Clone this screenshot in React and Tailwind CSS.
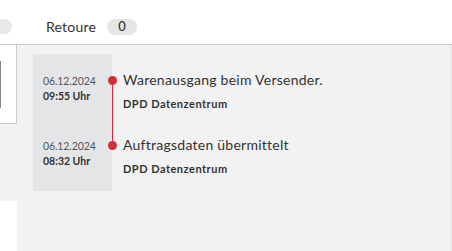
const events = [
  {
    date: "06.12.2024",
    time: "09:55 Uhr",
    title: "Warenausgang beim Versender.",
    place: "DPD Datenzentrum",
  },
  {
    date: "06.12.2024",
    time: "08:32 Uhr",
    title: "Auftragsdaten übermittelt",
    place: "DPD Datenzentrum",
  },
];

const App = () => {
  return (
    <div className="w-[452px] h-[251px] overflow-hidden bg-white flex flex-col font-['Lato',sans-serif] text-[#333]">
      {/* tabs */}
      <header className="h-[45px] shrink-0 border-b border-[#cdc7c2] flex items-center pt-[9px]">
        <span className="h-[15px] w-[12px] rounded-r-full bg-[#e8e8e8]"></span>
        <span className="ml-[34px] text-[14px] tracking-[0.2px] text-[#333]">Retoure</span>
        <span className="ml-[11px] h-[16px] w-[30px] rounded-full bg-[#e6e6e6] flex items-center justify-center text-[13px] font-medium text-[#333]">
          0
        </span>
      </header>

      <div className="flex flex-1">
        {/* left column */}
        <div className="w-[17px] shrink-0 flex flex-col">
          <div className="h-[79px] bg-white border-r border-b border-[#cfc8c3] flex items-center">
            <span className="w-px h-[47px] bg-[#888]"></span>
          </div>
          <div className="h-[77px] bg-[#f2f2f2]"></div>
          <div className="flex-1 bg-white"></div>
        </div>

        {/* tracking panel */}
        <main className="flex-1 bg-[#f2f2f2] pl-4 pt-[9px] border-r border-[#e6e6e6]">
          <div className="relative flex flex-col w-fit">
            {events.map((e, i) => (
              <div key={i} className="flex">
                <div
                  className={`w-[79px] bg-[#e4e5e7] pl-[10px] ${i === 0 ? "pt-[20px] h-[76px]" : "pt-[9px] h-[61px]"}`}
                >
                  <p className="text-[10.5px] leading-[14px] tracking-[-0.1px] text-[#555]">{e.date}</p>
                  <p className="text-[10.5px] leading-[16px] font-bold text-[#333]">{e.time}</p>
                </div>
                <div className={`pl-[11px] ${i === 0 ? "pt-[18px]" : "pt-[7px]"}`}>
                  <p className="text-[14px] leading-[16px] tracking-[0.25px] text-[#333] whitespace-nowrap">{e.title}</p>
                  <p className="mt-[9px] text-[11px] leading-[14px] font-bold tracking-[0.5px] text-[#333] whitespace-nowrap">
                    {e.place}
                  </p>
                </div>
              </div>
            ))}
            {/* connector line + dots */}
            <span className="absolute left-[78.5px] top-[26px] h-[65px] w-[1.5px] bg-[#d12e3a]"></span>
            <span className="absolute left-[74.5px] top-[21.5px] w-[9px] h-[9px] rounded-full bg-[#d12e3a]"></span>
            <span className="absolute left-[74.5px] top-[86.5px] w-[9px] h-[9px] rounded-full bg-[#d12e3a]"></span>
          </div>
        </main>
      </div>
    </div>
  );
};

export default App;
